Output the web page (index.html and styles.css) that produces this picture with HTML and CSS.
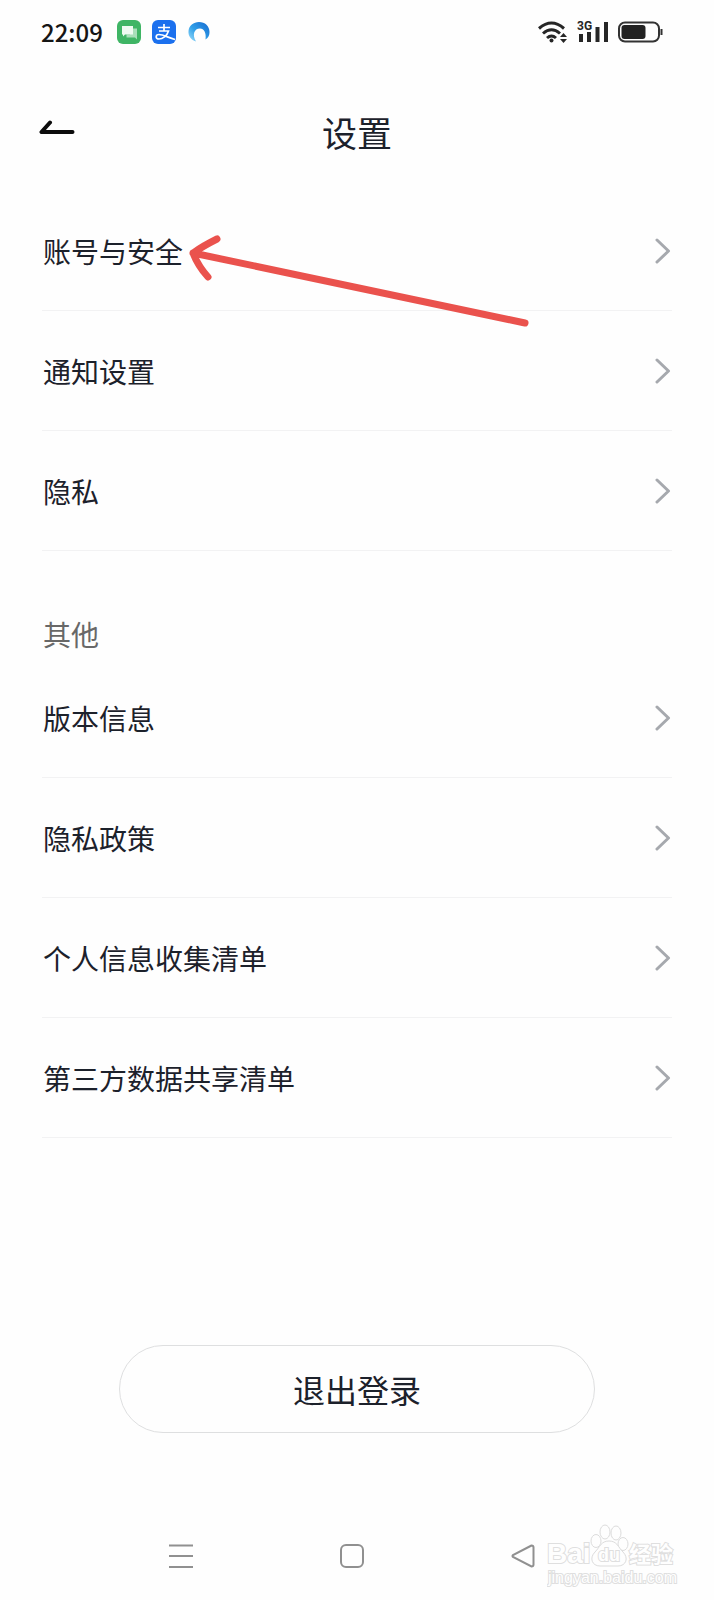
FILE: index.html
```html
<!DOCTYPE html>
<html lang="zh-CN">
<head>
<meta charset="utf-8">
<meta name="viewport" content="width=device-width, initial-scale=1">
<title>设置</title>
<link rel="stylesheet" href="styles.css">
</head>
<body>
<div class="screen">
  <div class="status">
    <div class="status-group">
      <span class="clock">22:09</span>
      <svg class="app" viewBox="0 0 24 24" width="24" height="24" aria-hidden="true">
        <rect width="24" height="24" rx="6" fill="#3fb565"/>
        <path d="M13 8.500h7v11l-2-2H9.500v-3H13z" fill="#a9dfba"/>
        <path d="M5 6h11v8.500H8l-2 2v-2H5z" fill="#eefaf1"/>
      </svg>
      <svg class="app" viewBox="0 0 24 24" width="24" height="24" aria-hidden="true">
        <rect width="24" height="24" rx="6" fill="#1b70ee"/>
        <path d="M6 7.500h12M12 4v7M7 11h9.500C15 16 10.500 19 7 19c-4 0-3.500-4.500 0-4.500 4 0 9 3 16 5" fill="none" stroke="#fff" stroke-width="1.700"/>
      </svg>
      <svg class="app" viewBox="0 0 24 24" width="24" height="24" aria-hidden="true">
        <defs><linearGradient id="ring" x1="0" y1="1" x2="1" y2="0"><stop offset="0" stop-color="#9fdffb"/><stop offset=".45" stop-color="#2f9fe8"/><stop offset="1" stop-color="#1668cf"/></linearGradient></defs>
        <path d="M9 21.500C4 20 1 16 1.500 11 2 5.500 6.500 2 12 2c6 0 10.500 4 10.500 10 0 3-1 5.500-4 7.500C19.500 13 17 8.500 13 8.500 7 8.500 5 15 9 21.500z" fill="url(#ring)"/>
      </svg>
    </div>
    <div class="status-group status-right">
      <svg viewBox="0 0 30 24" width="30" height="24" aria-hidden="true">
        <g fill="none" stroke="#262626" stroke-width="3"><path d="M1 8.500Q13.500-2.500 26 8.500"/><path d="M5 13.500Q13.500 6 22 13.500"/><path d="M9 18Q13.500 14 18 18"/></g>
        <circle cx="13.500" cy="20.500" r="2" fill="#262626"/>
        <path d="M22 17l3.500-4 3.500 4zM22 19l3.500 4 3.500-4z" fill="#262626"/>
      </svg>
      <svg viewBox="0 0 32 24" width="32" height="24" aria-hidden="true">
        <text x="0" y="10" class="net">3G</text>
        <path d="M4 22v-8M12 22V12M20.500 22V7M29 22V2" fill="none" stroke="#262626" stroke-width="4"/>
      </svg>
      <svg viewBox="0 0 45 24" width="45" height="24" aria-hidden="true">
        <rect x="1" y="2.500" width="40" height="19" rx="6" fill="none" stroke="#333" stroke-width="2"/>
        <rect x="3.500" y="5" width="24" height="14" rx="3" fill="#222"/>
        <path d="M43.500 9v6" stroke="#333" stroke-width="2"/>
      </svg>
    </div>
  </div>

  <header class="header">
    <button class="back" type="button" aria-label="返回">
      <svg viewBox="0 0 36 16" width="36" height="16"><path d="M11 2.500L2.500 12h31" fill="none" stroke="#0c0c0c" stroke-width="4" stroke-linecap="round" stroke-linejoin="round"/></svg>
    </button>
    <h1 class="title">设置</h1>
  </header>

  <main class="main">
    <nav class="list">
      <a class="row" href="#account">账号与安全<svg class="chevron" viewBox="0 0 16 26" width="16" height="26"><path d="M2 2l11.500 11L2 24"/></svg>
        <svg class="pointer" viewBox="0 0 360 110" width="360" height="110" aria-hidden="true">
          <path d="M35 8Q21 15 11 22Q16 35 26 46M11 22L343 92"/>
        </svg>
      </a>
      <a class="row" href="#notify">通知设置<svg class="chevron" viewBox="0 0 16 26" width="16" height="26"><path d="M2 2l11.500 11L2 24"/></svg></a>
      <a class="row" href="#privacy">隐私<svg class="chevron" viewBox="0 0 16 26" width="16" height="26"><path d="M2 2l11.500 11L2 24"/></svg></a>
    </nav>
    <h2 class="section">其他</h2>
    <nav class="list">
      <a class="row" href="#version">版本信息<svg class="chevron" viewBox="0 0 16 26" width="16" height="26"><path d="M2 2l11.500 11L2 24"/></svg></a>
      <a class="row" href="#policy">隐私政策<svg class="chevron" viewBox="0 0 16 26" width="16" height="26"><path d="M2 2l11.500 11L2 24"/></svg></a>
      <a class="row" href="#collect">个人信息收集清单<svg class="chevron" viewBox="0 0 16 26" width="16" height="26"><path d="M2 2l11.500 11L2 24"/></svg></a>
      <a class="row" href="#share">第三方数据共享清单<svg class="chevron" viewBox="0 0 16 26" width="16" height="26"><path d="M2 2l11.500 11L2 24"/></svg></a>
    </nav>
    <button class="logout" type="button">退出登录</button>
  </main>

  <footer class="sysbar">
    <button class="key" type="button" aria-label="菜单"><svg viewBox="0 0 24 24" width="24" height="24"><path d="M0 1.500h24M0 12h24M0 23h24"/></svg></button>
    <button class="key" type="button" aria-label="主页"><svg viewBox="0 0 24 24" width="24" height="24"><rect x="1" y="1" width="22" height="22" rx="5"/></svg></button>
    <button class="key" type="button" aria-label="后退"><svg viewBox="0 0 24 24" width="24" height="24"><path d="M20.500 1.500L2 11q-1 1 0 2l18.500 9.500q2 0 2-2v-17q0-2-2-2z"/></svg></button>
    <svg class="mark" viewBox="0 0 134 66" width="134" height="66">
      <g class="mark-shape">
        <ellipse cx="49" cy="17" rx="5" ry="6.500"/><ellipse cx="58" cy="8" rx="5" ry="7"/><ellipse cx="69" cy="9" rx="5" ry="7"/><ellipse cx="76" cy="20" rx="5" ry="6.500"/>
        <path d="M62 17c8 0 9 6 14 11 6 6 3 14-5 14H53c-8 0-11-8-5-14 5-5 6-11 14-11z"/>
      </g>
      <text class="mark-text mark-latin" x="0" y="39">Bai</text>
      <text class="mark-text mark-du" x="51" y="37">du</text>
      <text class="mark-text mark-cn" x="82" y="38">经验</text>
      <text class="mark-text mark-url" x="1" y="59">jingyan.baidu.com</text>
    </svg>
  </footer>
</div>
</body>
</html>
```
FILE: styles.css
```css
* { box-sizing: border-box; }

body {
  margin: 0;
  background: #fefefe;
  color: #1c212b;
  font-family: "Noto Sans CJK SC", sans-serif;
}

button {
  padding: 0;
  border: 0;
  background: none;
  color: inherit;
  font: inherit;
}

svg { display: block; }

.screen {
  display: flex;
  flex-direction: column;
  min-height: 100vh;
}

.status {
  display: flex;
  align-items: center;
  justify-content: space-between;
  height: 64px;
  padding: 0 51px 0 41px;
}

.status-group { display: flex; align-items: center; gap: 11px; }
.status-right { gap: 9px; }

.clock {
  margin-right: 3px;
  color: #151515;
  font-size: 24px;
  font-weight: 500;
  line-height: 32px;
}

.net { font: bold 12px Roboto, sans-serif; fill: #262626; }

.header {
  display: grid;
  grid-template-columns: 1fr auto 1fr;
  align-items: center;
  height: 127px;
  padding: 8px 39px 0;
}

.back { justify-self: start; padding-bottom: 8px; }

.title {
  margin: 0;
  font-size: 35px;
  font-weight: 400;
  line-height: 48px;
}

.main { display: flex; flex-direction: column; padding: 0 42px; }

.row {
  position: relative;
  display: flex;
  align-items: center;
  justify-content: space-between;
  height: 120px;
  padding: 0 1px;
  border-bottom: 1px solid #f2f2f3;
  color: inherit;
  font-size: 28px;
  line-height: 40px;
  text-decoration: none;
}

.chevron {
  fill: none;
  stroke: #a6a9ae;
  stroke-width: 3;
  stroke-linecap: round;
  stroke-linejoin: round;
}

.pointer {
  position: absolute;
  top: 40px;
  left: 140px;
  z-index: 1;
  fill: none;
  stroke: #ea524d;
  stroke-width: 7;
  stroke-linecap: round;
  stroke-linejoin: round;
}

.section {
  margin: 0;
  padding: 63px 0 4px 1px;
  color: #686868;
  font-size: 28px;
  font-weight: 400;
  line-height: 40px;
}

.logout {
  align-self: center;
  width: 476px;
  max-width: 100%;
  height: 88px;
  margin-top: 207px;
  border: 1px solid #dedfe0;
  border-radius: 44px;
  font-size: 32px;
}

.sysbar {
  position: relative;
  display: flex;
  align-items: center;
  justify-content: space-between;
  height: 88px;
  margin-top: auto;
  padding: 0 179px 0 169px;
}

.key svg { fill: none; stroke: #909090; stroke-width: 2; }

.mark { position: absolute; right: 33px; bottom: 10px; }
.mark-shape { fill: #fefefe; stroke: #dcdcdc; }
.mark-text { fill: #fefefe; stroke: #dfdfdf; stroke-width: 2; paint-order: stroke; }
.mark-latin { font: bold 28px "Liberation Sans", sans-serif; }
.mark-du { font: bold 18px "Liberation Sans", sans-serif; }
.mark-cn { font: bold 22px "Noto Sans CJK SC", sans-serif; }
.mark-url { font: 16px "Liberation Sans", sans-serif; }
```
